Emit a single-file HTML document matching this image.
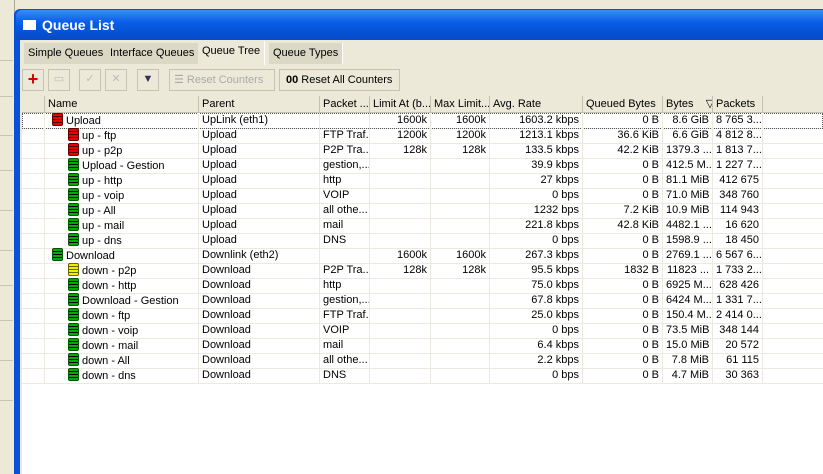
<!DOCTYPE html><html style="overflow:hidden;height:474px"><head><style>
body{margin:0;width:823px;height:474px;background:#ece9d8;position:relative;overflow:hidden;font-family:"Liberation Sans",sans-serif;font-size:11px;color:#000}
.strip{position:absolute;left:0;top:0;width:14px;height:474px;background:#ece9d8;border-right:1px solid #aca899}
.strip i{position:absolute;left:0;width:13px;height:1px;background:#c9c5b5}
.win{position:absolute;left:14px;top:9px;width:809px;height:465px;background:#0a50d8;border-radius:6px 0 0 0}
.title{position:absolute;left:16px;top:10px;width:807px;height:30px;background:linear-gradient(#3a8cf5,#0a5fe8 40%,#0453d8 70%,#0a4bc4);border-radius:6px 0 0 0}
.title span{position:absolute;left:26px;top:7px;color:#fff;font-weight:bold;font-size:14px}
.title b{position:absolute;left:7px;top:10px;width:13px;height:10px;background:#fff}
.inner{position:absolute;left:20px;top:40px;width:803px;height:434px;background:#ece9d8}
.tab{position:absolute;top:43px;height:21px;line-height:21px;padding:0 4px;background:#dcd8c6;border-right:1px solid #fff;font-size:11px}
.tb{position:absolute;top:69px;height:22px;border:1px solid #c7c3b3;background:#ece9d8;box-sizing:border-box}
.tbl{position:absolute;left:22px;top:96px;width:801px;height:378px;background:#fff}
.hdr{position:absolute;left:22px;top:96px;width:801px;height:16px;background:#ece9d8;border-bottom:1px solid #c4c0b0}
.h{position:absolute;top:96px;height:16px;line-height:16px;border-right:1px solid #c4c0b0;padding-left:3px;box-sizing:border-box;white-space:nowrap;overflow:hidden}
.row{position:absolute;left:22px;width:801px;height:15px;border-bottom:1px solid #ebe9e2}
.c{position:absolute;top:0;height:15px;line-height:15px;white-space:nowrap;overflow:hidden;box-sizing:border-box;padding:0 3px;border-right:1px solid #ebe9e2}
.r{text-align:right}
.ic{display:inline-block;width:9px;height:11px;vertical-align:-2px;margin-right:3px;border-radius:2px;background:repeating-linear-gradient(#0a0 0 2px,#000 2px 3px);border:1px solid #050}
.red{background:repeating-linear-gradient(#e00 0 2px,#500 2px 3px);border-color:#600}
.yel{background:repeating-linear-gradient(#ee0 0 2px,#660 2px 3px);border-color:#660}
</style></head><body>
<div class="strip"><i style="top:60px"></i><i style="top:96px"></i><i style="top:135px"></i><i style="top:170px"></i><i style="top:210px"></i><i style="top:250px"></i><i style="top:285px"></i><i style="top:320px"></i><i style="top:360px"></i><i style="top:400px"></i></div>
<div class="win"></div>
<div class="title"><b></b><span>Queue List</span></div>
<div class="inner"></div>
<div class="tab" style="left:24px">Simple Queues</div>
<div class="tab" style="left:106px">Interface Queues</div>
<div class="tab" style="left:198px;background:#ece9d8;top:41px;height:24px">Queue Tree</div>
<div class="tab" style="left:269px">Queue Types</div>
<div class="tb" style="left:22px;width:22px;color:#d00;font-weight:bold;font-size:18px;line-height:18px;text-align:center">+</div>
<div class="tb" style="left:48px;width:22px;color:#bbb;text-align:center;line-height:18px">▭</div>
<div class="tb" style="left:79px;width:22px;color:#bbb;text-align:center;line-height:18px">✓</div>
<div class="tb" style="left:105px;width:22px;color:#bbb;text-align:center;line-height:18px">✕</div>
<div class="tb" style="left:137px;width:22px;text-align:center;line-height:18px;color:#335">▼</div>
<div class="tb" style="left:169px;width:106px;color:#aaa;line-height:20px;padding-left:4px">☰ Reset Counters</div>
<div class="tb" style="left:279px;width:121px;line-height:20px;padding-left:6px"><b>00</b> Reset All Counters</div>
<div class="tbl"></div>
<div class="hdr"></div>
<div class="h" style="left:22px;width:23px"></div>
<div class="h" style="left:45px;width:154px">Name</div>
<div class="h" style="left:199px;width:121px">Parent</div>
<div class="h" style="left:320px;width:50px">Packet ...</div>
<div class="h" style="left:370px;width:61px">Limit At (b...</div>
<div class="h" style="left:431px;width:59px">Max Limit...</div>
<div class="h" style="left:490px;width:93px">Avg. Rate</div>
<div class="h" style="left:583px;width:80px">Queued Bytes</div>
<div class="h" style="left:663px;width:50px">Bytes &nbsp;&nbsp;&nbsp;▽</div>
<div class="h" style="left:713px;width:50px">Packets</div>
<div id="rows"></div>
<script>
var d=[
[0,'r','Upload','UpLink (eth1)','','1600k','1600k','1603.2 kbps','0 B','8.6 GiB','8 765 3...'],
[1,'r','up - ftp','Upload','FTP Traf...','1200k','1200k','1213.1 kbps','36.6 KiB','6.6 GiB','4 812 8...'],
[1,'r','up - p2p','Upload','P2P Tra...','128k','128k','133.5 kbps','42.2 KiB','1379.3 ...','1 813 7...'],
[1,'g','Upload - Gestion','Upload','gestion,...','','','39.9 kbps','0 B','412.5 M...','1 227 7...'],
[1,'g','up - http','Upload','http','','','27 kbps','0 B','81.1 MiB','412 675'],
[1,'g','up - voip','Upload','VOIP','','','0 bps','0 B','71.0 MiB','348 760'],
[1,'g','up - All','Upload','all othe...','','','1232 bps','7.2 KiB','10.9 MiB','114 943'],
[1,'g','up - mail','Upload','mail','','','221.8 kbps','42.8 KiB','4482.1 ...','16 620'],
[1,'g','up - dns','Upload','DNS','','','0 bps','0 B','1598.9 ...','18 450'],
[0,'g','Download','Downlink (eth2)','','1600k','1600k','267.3 kbps','0 B','2769.1 ...','6 567 6...'],
[1,'y','down - p2p','Download','P2P Tra...','128k','128k','95.5 kbps','1832 B','11823 ...','1 733 2...'],
[1,'g','down - http','Download','http','','','75.0 kbps','0 B','6925 M...','628 426'],
[1,'g','Download - Gestion','Download','gestion,...','','','67.8 kbps','0 B','6424 M...','1 331 7...'],
[1,'g','down - ftp','Download','FTP Traf...','','','25.0 kbps','0 B','150.4 M...','2 414 0...'],
[1,'g','down - voip','Download','VOIP','','','0 bps','0 B','73.5 MiB','348 144'],
[1,'g','down - mail','Download','mail','','','6.4 kbps','0 B','15.0 MiB','20 572'],
[1,'g','down - All','Download','all othe...','','','2.2 kbps','0 B','7.8 MiB','61 115'],
[1,'g','down - dns','Download','DNS','','','0 bps','0 B','4.7 MiB','30 363']];
var cols=[[0,23],[23,154],[177,121],[298,50],[348,61],[409,59],[468,93],[561,80],[641,50],[691,50]];
var h='';d.forEach(function(r,i){
var ic='<span class="ic '+(r[1]=='r'?'red':r[1]=='y'?'yel':'')+'"></span>';
var cells=['',ic+r[2],r[3],r[4],r[5],r[6],r[7],r[8],r[9],r[10]];
h+='<div class="row" style="top:'+(113+i*15)+'px'+(i==0?';outline:1px dotted #555;outline-offset:-1px':'')+'">';
cells.forEach(function(c,j){var st='left:'+cols[j][0]+'px;width:'+cols[j][1]+'px';if(j==1)st+=';padding-left:'+(r[0]?23:7)+'px';
h+='<div class="c'+(j>=4&&j!=9||j==9&&c.indexOf('.')<0?' r':'')+'" style="'+st+'">'+c+'</div>';});
h+='</div>';});
document.getElementById('rows').innerHTML=h;
</script>
</body></html>
